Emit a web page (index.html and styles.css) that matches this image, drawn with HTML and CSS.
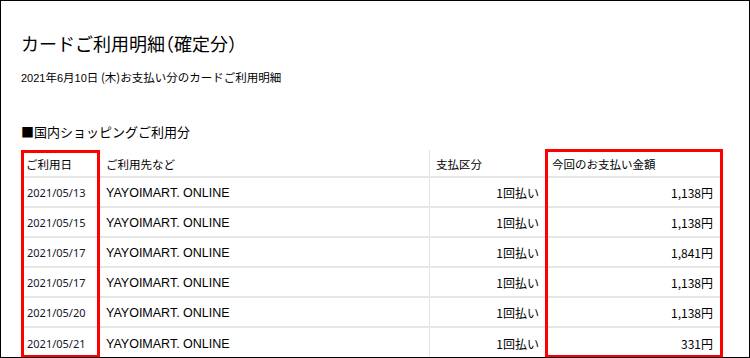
FILE: index.html
```html
<!DOCTYPE html>
<html lang="ja">
<head>
<meta charset="utf-8">
<title>カードご利用明細</title>
<link rel="stylesheet" href="styles.css">
</head>
<body>
<div class="page">
  <h1 class="title">カードご利用明細（確定分）</h1>
  <p class="sub"><span class="d">2021</span>年<span class="d">6</span>月<span class="d">10</span>日 (木)お支払い分のカードご利用明細</p>
  <h2 class="section">■国内ショッピングご利用分</h2>
  <div class="table">
    <div class="row head">
      <div class="cell">ご利用日</div>
      <div class="cell">ご利用先など</div>
      <div class="cell">支払区分</div>
      <div class="cell">今回のお支払い金額</div>
    </div>
    <div class="row">
      <div class="cell date">2021/05/13</div>
      <div class="cell name">YAYOIMART. ONLINE</div>
      <div class="cell num">1回払い</div>
      <div class="cell num amt">1,138円</div>
    </div>
    <div class="row">
      <div class="cell date">2021/05/15</div>
      <div class="cell name">YAYOIMART. ONLINE</div>
      <div class="cell num">1回払い</div>
      <div class="cell num amt">1,138円</div>
    </div>
    <div class="row">
      <div class="cell date">2021/05/17</div>
      <div class="cell name">YAYOIMART. ONLINE</div>
      <div class="cell num">1回払い</div>
      <div class="cell num amt">1,841円</div>
    </div>
    <div class="row">
      <div class="cell date">2021/05/17</div>
      <div class="cell name">YAYOIMART. ONLINE</div>
      <div class="cell num">1回払い</div>
      <div class="cell num amt">1,138円</div>
    </div>
    <div class="row">
      <div class="cell date">2021/05/20</div>
      <div class="cell name">YAYOIMART. ONLINE</div>
      <div class="cell num">1回払い</div>
      <div class="cell num amt">1,138円</div>
    </div>
    <div class="row last">
      <div class="cell date">2021/05/21</div>
      <div class="cell name">YAYOIMART. ONLINE</div>
      <div class="cell num">1回払い</div>
      <div class="cell num amt">331円</div>
    </div>
    <div class="hl hl-date"></div>
    <div class="hl hl-amt"></div>
  </div>
</div>
</body>
</html>
```

FILE: styles.css
```css
html, body {
  margin: 0;
  padding: 0;
  background: #fff;
}
body {
  width: 750px;
  height: 358px;
  overflow: hidden;
}
.page {
  box-sizing: border-box;
  width: 750px;
  height: 358px;
  border: 1px solid #000;
  padding: 30px 0 0 20px;
  overflow: hidden;
  font-family: "Noto Sans CJK JP", sans-serif;
  color: #000;
}
.title {
  margin: 0;
  font-size: 18px;
  font-weight: normal;
  line-height: 24px;
  font-feature-settings: "halt";
}
.sub {
  margin: 14px 0 0;
  font-size: 11.5px;
  line-height: 16px;
}
.sub .d {
  font-family: "Liberation Sans", "Noto Sans CJK JP", sans-serif;
  font-size: 11px;
}
.section {
  margin: 37px 0 0;
  font-size: 13px;
  font-weight: normal;
  line-height: 18px;
}
.table {
  position: relative;
  margin-top: 9px;
  width: 702px;
}
.row {
  display: grid;
  grid-template-columns: 79px 330px 116px 177px;
  box-sizing: border-box;
  height: 30px;
  border-bottom: 2px solid #e6e6e6;
  font-size: 12px;
}
.row.head {
  height: 28px;
  font-size: 11.5px;
}
.row.last {
  border-bottom: none;
}
.cell {
  display: flex;
  align-items: center;
  padding: 1px 6px 0;
  border-right: 1px solid #e3e3e3;
  white-space: nowrap;
}
.cell:first-child {
  padding-left: 5px;
}
.cell:last-child {
  border-right: none;
}
.date {
  font-family: "Noto Sans", "Noto Sans CJK JP", sans-serif;
  font-size: 11px;
  color: #15152b;
  padding-left: 6px;
}
.row .date {
  padding-left: 6px;
}
.name {
  font-family: "Liberation Sans", "Noto Sans CJK JP", sans-serif;
  font-size: 12.5px;
}
.num {
  justify-content: flex-end;
}
.amt {
  padding-right: 10px;
}
.hl {
  position: absolute;
  box-sizing: border-box;
  border: 3px solid #ff0000;
  pointer-events: none;
}
.hl-date {
  left: 0;
  top: 0;
  width: 79px;
  height: 208px;
}
.hl-amt {
  left: 524px;
  top: -1px;
  width: 178px;
  height: 209px;
}
```
